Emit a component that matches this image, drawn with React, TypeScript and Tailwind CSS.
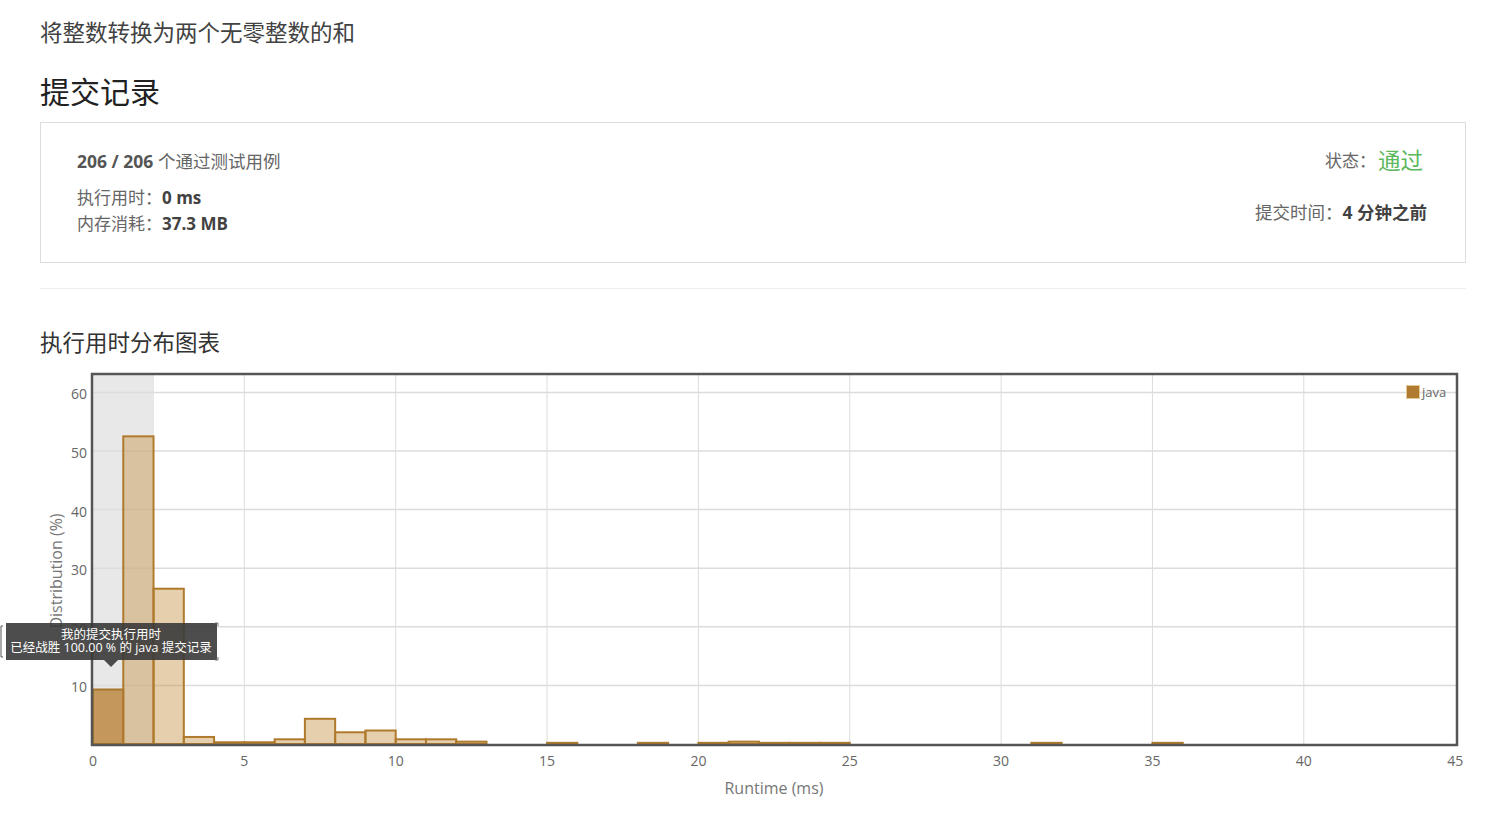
import React from "react";

const X0 = 93;
const XS = 30.27;
const Y0 = 745;
const YS = 5.86;
const xp = (v: number) => X0 + v * XS;
const yp = (v: number) => Y0 - v * YS;

const bars: [number, number][] = [
  [1, 52.5],
  [2, 26.5],
  [3, 1.2],
  [4, 0.3],
  [5, 0.3],
  [6, 0.8],
  [7, 4.3],
  [8, 2.0],
  [9, 2.3],
  [10, 0.8],
  [11, 0.8],
  [12, 0.4],
  [15, 0.2],
  [18, 0.2],
  [20, 0.2],
  [21, 0.4],
  [22, 0.2],
  [23, 0.2],
  [24, 0.2],
  [31, 0.2],
  [35, 0.2],
];

const font = '"Open Sans", "Noto Sans CJK SC", sans-serif';

function Chart() {
  const yTicks = [10, 20, 30, 40, 50, 60];
  const xTicks = [0, 5, 10, 15, 20, 25, 30, 35, 40, 45];
  return (
    <svg
      width={1506}
      height={450}
      viewBox="0 360 1506 450"
      className="block"
      style={{ fontFamily: font }}
    >
      {/* highlight band */}
      <rect x={93} y={376} width={61} height={369} fill="#e8e8e8" />
      {/* grid */}
      {yTicks.map((t) => (
        <line key={"h" + t} x1={93} x2={1456} y1={yp(t)} y2={yp(t)} stroke="#dcdcdc" strokeWidth={1.5} />
      ))}
      {xTicks.slice(1, -1).map((t) => (
        <line key={"v" + t} x1={xp(t)} x2={xp(t)} y1={376} y2={745} stroke="#dcdcdc" strokeWidth={1} />
      ))}
      {/* bars */}
      <rect
        x={xp(0)}
        y={yp(9.3)}
        width={XS}
        height={9.3 * YS}
        fill="#c4975c"
        stroke="#a8762c"
        strokeWidth={2}
      />
      {bars.map(([s, v]) => (
        <rect
          key={s}
          x={xp(s)}
          y={yp(v)}
          width={XS}
          height={v * YS}
          fill="rgba(196,140,60,0.42)"
          stroke="#b07a2c"
          strokeWidth={2}
        />
      ))}
      {/* frame */}
      <rect x={92} y={375} width={1365} height={371} fill="none" stroke="#555" strokeWidth={2.5} />
      {/* y labels */}
      {yTicks.map((t) => (
        <text key={"yl" + t} x={87} y={yp(t) + 7} textAnchor="end" fontSize={14} fill="#666">
          {t}
        </text>
      ))}
      {/* x labels */}
      {xTicks.map((t) => (
        <text key={"xl" + t} x={xp(t)} y={767} textAnchor="middle" fontSize={14} fill="#666">
          {t}
        </text>
      ))}
      <text x={774} y={795} textAnchor="middle" fontSize={16} fill="#777">
        Runtime (ms)
      </text>
      <text
        x={0}
        y={0}
        transform="translate(62 572) rotate(-90)"
        textAnchor="middle"
        fontSize={16}
        fill="#777"
      >
        Distribution (%)
      </text>
      {/* legend */}
      <rect x={1406.5} y={386.5} width={13} height={13} fill="#b07a30" stroke="#e4c896" strokeWidth={1} />
      <text x={1422} y={398} fontSize={13} fill="#666">
        java
      </text>
      {/* tooltip */}
      <g>
        <rect x={6} y={624} width={211} height={37} fill="#3a3a3a" fillOpacity={0.9} />
        <polygon points="104,661 118,661 111,668" fill="#3a3a3a" fillOpacity={0.9} />
        <path d="M3 627 L1 627 L1 658 L3 658" fill="none" stroke="#555" strokeWidth={1} />
        <path d="M215 624 L218 624 L218 627 M215 661 L218 661 L218 658" fill="none" stroke="#777" strokeWidth={1} />
        <text x={111} y={640} textAnchor="middle" fontSize={12.5} fill="#fff">
          我的提交执行用时
        </text>
        <text x={111} y={653} textAnchor="middle" fontSize={12.5} fill="#fff">
          已经战胜 100.00 % 的 java 提交记录
        </text>
      </g>
    </svg>
  );
}

export default function App() {
  return (
    <div className="w-[1506px] h-[827px] bg-white overflow-hidden" style={{ fontFamily: font }}>
      <div className="px-10">
        <div className="mt-[19px] text-[22.5px] leading-[28px] text-[#424242]">将整数转换为两个无零整数的和</div>
        <div className="mt-[25px] text-[30px] leading-[40px] text-[#212121]">提交记录</div>
        <div className="mt-[10px] h-[141px] border border-[#dddddd] flex justify-between pl-[36px] pr-[38px] pt-[26px]">
          <div className="flex flex-col">
            <div className="text-[17.5px] leading-[24px] text-[#666]">
              <span className="font-bold text-[#555]">206 / 206</span> 个通过测试用例
            </div>
            <div className="mt-[13px] text-[17px] leading-[24px] text-[#666]">
              执行用时：<span className="font-bold text-[#424242]">0 ms</span>
            </div>
            <div className="mt-[2px] text-[17px] leading-[24px] text-[#666]">
              内存消耗：<span className="font-bold text-[#424242]">37.3 MB</span>
            </div>
          </div>
          <div className="flex flex-col items-end">
            <div className="text-[17px] leading-[24px] text-[#666] flex items-center">
              状态：<span className="text-[22.5px] text-[#5cb85c] ml-[2px] mr-[4px]">通过</span>
            </div>
            <div className="mt-[27px] text-[17.5px] leading-[24px] text-[#666]">
              提交时间：<span className="font-bold text-[#424242]">4 分钟之前</span>
            </div>
          </div>
        </div>
        <div className="mt-[25px] h-px bg-[#eeeeee]" />
        <div className="mt-[39px] text-[22.5px] leading-[30px] text-[#333]">执行用时分布图表</div>
      </div>
      <div className="mt-[1px]">
        <Chart />
      </div>
    </div>
  );
}
